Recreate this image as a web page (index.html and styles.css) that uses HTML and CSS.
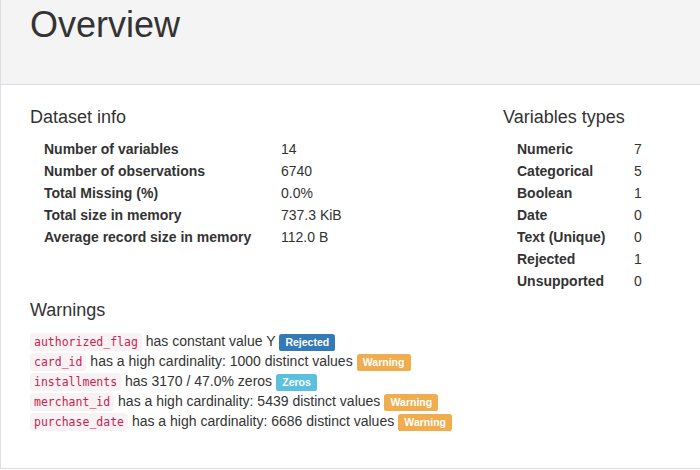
FILE: index.html
```html
<!DOCTYPE html>
<html>
<head>
<meta charset="utf-8">
<link rel="stylesheet" href="styles.css">
</head>
<body>
<div class="panel">
  <div class="panel-heading">
    <h1 class="title">Overview</h1>
  </div>
  <div class="panel-body">
    <div class="row">
      <div class="col-left">
        <h4 class="section">Dataset info</h4>
        <table class="stats stats-info">
          <tr><th>Number of variables</th><td>14</td></tr>
          <tr><th>Number of observations</th><td>6740</td></tr>
          <tr><th>Total Missing (%)</th><td>0.0%</td></tr>
          <tr><th>Total size in memory</th><td>737.3 KiB</td></tr>
          <tr><th>Average record size in memory</th><td>112.0 B</td></tr>
        </table>
      </div>
      <div class="col-right">
        <h4 class="section">Variables types</h4>
        <table class="stats stats-types">
          <tr><th>Numeric</th><td>7</td></tr>
          <tr><th>Categorical</th><td>5</td></tr>
          <tr><th>Boolean</th><td>1</td></tr>
          <tr><th>Date</th><td>0</td></tr>
          <tr><th>Text (Unique)</th><td>0</td></tr>
          <tr><th>Rejected</th><td>1</td></tr>
          <tr><th>Unsupported</th><td>0</td></tr>
        </table>
      </div>
    </div>
    <div class="warnings">
      <h4 class="section">Warnings</h4>
      <ul class="warning-list">
        <li><code>authorized_flag</code> has constant value Y <span class="label label-primary">Rejected</span></li>
        <li><code>card_id</code> has a high cardinality: 1000 distinct values <span class="label label-warning">Warning</span></li>
        <li><code>installments</code> has 3170 / 47.0% zeros <span class="label label-info">Zeros</span></li>
        <li><code>merchant_id</code> has a high cardinality: 5439 distinct values <span class="label label-warning">Warning</span></li>
        <li><code>purchase_date</code> has a high cardinality: 6686 distinct values <span class="label label-warning">Warning</span></li>
      </ul>
    </div>
  </div>
</div>
</body>
</html>
```

FILE: styles.css
```css
html, body {
  margin: 0;
  padding: 0;
  background: #fff;
  overflow: hidden;
}
body {
  font-family: "Liberation Sans", Arial, sans-serif;
  font-size: 14px;
  color: #333;
  width: 700px;
  height: 470px;
}
.panel {
  width: 700px;
  box-sizing: border-box;
  border-left: 1px solid #dddde3;
  border-bottom: 1px solid #dddde3;
  background: #fff;
}
.panel-heading {
  background: #f4f4f5;
  height: 85px;
  border-bottom: 1px solid #dddde3;
  padding-left: 29px;
  box-sizing: border-box;
}
.title {
  margin: 0;
  padding-top: 5px;
  font-size: 36px;
  font-weight: 500;
  line-height: 1.1;
  color: #333;
}
.panel-body {
  padding: 0 0 0 29px;
  height: 383px;
  box-sizing: border-box;
}
.row {
  display: flex;
}
.col-left {
  width: 473px;
}
.section {
  margin: 23px 0 0;
  font-size: 18px;
  font-weight: 500;
  line-height: 1.1;
}
.stats {
  border-collapse: collapse;
  margin: 10px 0 0 14px;
}
.stats th, .stats td {
  padding: 0;
  height: 22px;
  line-height: 22px;
  text-align: left;
  vertical-align: top;
  white-space: nowrap;
}
.stats th {
  font-weight: bold;
}
.stats-info th {
  width: 237px;
}
.stats-types th {
  width: 117px;
}
.warnings .section {
  margin-top: 9.5px;
}
.warning-list {
  list-style: none;
  margin: 10px 0 0;
  padding: 0;
}
.warning-list li {
  line-height: 20px;
  height: 20px;
  white-space: nowrap;
}
code {
  font-family: "DejaVu Sans Mono", "Liberation Mono", monospace;
  font-size: 11.5px;
  color: #c7254e;
  background: #f9f2f4;
  padding: 2px 4px;
  border-radius: 4px;
}
.label {
  display: inline;
  padding: .2em .6em .3em;
  font-size: 75%;
  font-weight: bold;
  line-height: 1;
  color: #fff;
  text-align: center;
  white-space: nowrap;
  vertical-align: baseline;
  border-radius: .25em;
}
.label-primary { background: #337ab7; }
.label-warning { background: #f0ad4e; }
.label-info { background: #5bc0de; }
```
